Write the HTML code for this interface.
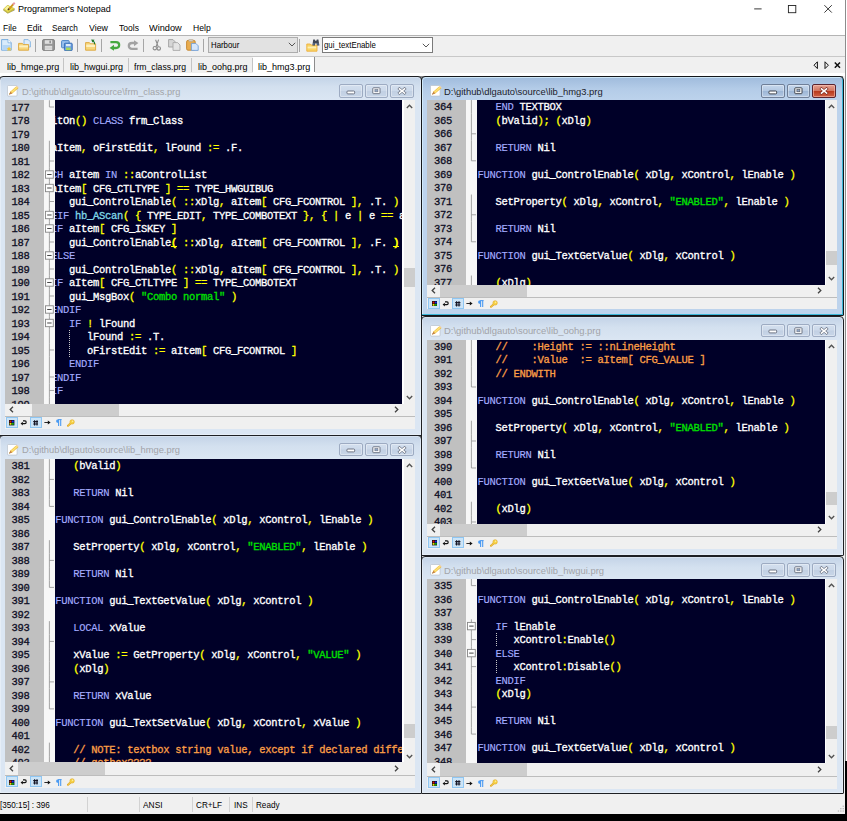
<!DOCTYPE html>
<html><head><meta charset="utf-8"><title>Programmer's Notepad</title>
<style>
html,body{margin:0;padding:0;background:#fff}
body{width:847px;height:821px;position:relative;overflow:hidden;font-family:"Liberation Sans",sans-serif;font-size:11px;color:#000}
.abs{position:absolute}
.clip{overflow:hidden}
.ui{position:absolute;white-space:nowrap;line-height:14px;height:14px}
.cw{position:absolute;box-sizing:border-box;border:1px solid #1e2024;border-radius:4px 4px 1px 1px;
 background:linear-gradient(#c3d3e7 0px,#d3e0ef 10px,#dbe6f3 24px,#dbe6f3 100%);box-shadow:inset 0 0 0 1px rgba(255,255,255,0.32)}
.cw.act{background:linear-gradient(#9fbbdc 0px,#b4cce8 12px,#bdd3ec 24px,#bdd3ec 100%);border-color:#14161a;box-shadow:inset -1px -1px 0 0 #3bb6d6,inset 1px 1px 0 0 rgba(215,240,252,0.8)}
.wt{white-space:nowrap;font-size:9.8px;line-height:14px}
.wb{position:absolute;box-sizing:border-box;border:1px solid #9dabc2;border-radius:2px;
 background:linear-gradient(#d3dfee 0%,#ccd9ea 48%,#c2d0e3 52%,#c8d6e8 100%);box-shadow:inset 0 0 0 1px rgba(255,255,255,0.35)}
.wb.ab{border-color:#6f7f98;background:linear-gradient(#c6d7ec 0%,#b3c8e2 48%,#9db6d6 52%,#b4c9e3 100%)}
.wb.red{border-color:#5a2430;background:linear-gradient(#e3a193 0%,#d27560 48%,#b9391c 52%,#cf6247 100%);box-shadow:inset 0 0 0 1px rgba(255,200,185,0.55)}
.code{background:#000028;color:#ffffff;font-family:"Liberation Mono",monospace;font-weight:normal;-webkit-text-stroke:0.32px;font-size:10.5px;letter-spacing:-0.3011px}
.cl{position:absolute;white-space:pre;line-height:13.5px;height:13.5px}
.ln{position:absolute;left:0;width:24.6px;text-align:right;white-space:pre;line-height:13.5px;height:13.5px;
 font-family:"Liberation Mono",monospace;font-weight:normal;-webkit-text-stroke:0.3px;font-size:10.5px;letter-spacing:-0.3011px;color:#0e0e24}
.k{color:#a4acff;-webkit-text-stroke:0.12px}.o{color:#ffff00}.s{color:#00e000}.c{color:#fa9e46}.f{color:#7fd6e6}
.hb{text-decoration:underline;text-decoration-thickness:1.4px;text-underline-offset:0.3px;text-decoration-skip-ink:none;-webkit-text-stroke:0.7px}
.sep{position:absolute;width:1px;background:#a6a6a6;top:38.6px;height:13px}
.tsep{position:absolute;width:1px;background:#c4c4c4;top:58px;height:13.5px}
.ssep{position:absolute;width:1px;background:#d2d2d2;top:796.5px;height:15.5px}
</style></head>
<body>
<svg class="abs" style="left:0px;top:0px" width="18" height="16" viewBox="0 0 18 16"><path d="M3.2 9.3 L7.6 5.0 L14.6 8.4 L14.5 10.4 L7.8 13.6 L3.5 10.6 Z" fill="#9a9a86"/><path d="M3.4 9.0 L7.6 5.0 L14.4 8.3 L7.9 12.6 Z" fill="#e6d944"/><path d="M4.6 8.8 L7.6 5.8 L9.4 6.8 L6.6 10.2 Z" fill="#f6f2a8"/><path d="M3.5 9.6 L7.9 12.7 L14.4 8.6 L14.4 9.8 L7.8 13.4 L3.6 10.4 Z" fill="#cfc02e"/><path d="M8.6 9.3 L13.4 4.2" stroke="#c48a14" stroke-width="1.9"/><path d="M9.2 8.4 L13.0 4.4" stroke="#e6b83a" stroke-width="0.7"/><path d="M13.0 4.6 L14.7 2.8" stroke="#e79aa4" stroke-width="2"/><path d="M8.0 9.9 L9.0 8.9" stroke="#4a3a3a" stroke-width="1.5"/></svg>
<div class="ui" id="ttl" style="left:18.3px;top:2.3px;font-size:9.6px;transform:scaleX(0.9383);transform-origin:0 0;color:#000">Programmer's Notepad</div>
<svg class="abs" style="left:752px;top:2px" width="90" height="14" viewBox="0 0 90 14"><path d="M2.2 6.9 H9.6" stroke="#222" stroke-width="0.9"/><rect x="36.4" y="3.5" width="7.4" height="7.2" fill="none" stroke="#222" stroke-width="0.9"/><path d="M72.4 3.2 L79.8 10.6 M79.8 3.2 L72.4 10.6" stroke="#222" stroke-width="0.9"/></svg>
<div class="ui mn" id="m0" style="left:2.6px;top:20.5px;font-size:9.4px;transform:scaleX(0.9007);transform-origin:0 0">File</div>
<div class="ui mn" id="m1" style="left:26.5px;top:20.5px;font-size:9.4px;transform:scaleX(0.9136);transform-origin:0 0">Edit</div>
<div class="ui mn" id="m2" style="left:52.3px;top:20.5px;font-size:9.4px;transform:scaleX(0.8721);transform-origin:0 0">Search</div>
<div class="ui mn" id="m3" style="left:88.9px;top:20.5px;font-size:9.4px;transform:scaleX(0.9403);transform-origin:0 0">View</div>
<div class="ui mn" id="m4" style="left:118.6px;top:20.5px;font-size:9.4px;transform:scaleX(0.9087);transform-origin:0 0">Tools</div>
<div class="ui mn" id="m5" style="left:149.2px;top:20.5px;font-size:9.4px;transform:scaleX(0.9820);transform-origin:0 0">Window</div>
<div class="ui mn" id="m6" style="left:192.7px;top:20.5px;font-size:9.4px;transform:scaleX(0.9171);transform-origin:0 0">Help</div>
<div class="abs" style="left:0;top:35.2px;width:845.4px;height:21.8px;background:#f0f0f0;border-top:1px solid #b4b4b4;border-bottom:1px solid #c8c8c8;box-sizing:border-box"></div>
<div class="abs" style="left:0;top:57px;width:845.4px;height:15.6px;background:#f0f0f0"></div>
<div class="abs" style="left:0;top:72.6px;width:845.4px;height:3.2px;background:#fff"></div>
<div class="abs" style="left:0;top:75.6px;width:845.4px;height:1px;background:linear-gradient(#9a9a9a,#5a5a5a)"></div>
<div class="abs" style="left:0;top:76px;width:845.4px;height:719px;background:#f0f0f0"></div>
<div class="abs" style="left:417px;top:76px;width:9px;height:4px;background:#8e8e8e"></div>
<div class="abs" style="left:840px;top:76px;width:5.4px;height:4px;background:linear-gradient(90deg,#8e8e8e 60%,#f0f0f0 61%)"></div>
<div class="sep" style="left:35.1px"></div>
<div class="sep" style="left:77.0px"></div>
<div class="sep" style="left:100.8px"></div>
<div class="sep" style="left:143.0px"></div>
<div class="sep" style="left:203.0px"></div>
<div class="sep" style="left:299.1px"></div>
<svg class="abs" style="left:1.2px;top:39.2px" width="11" height="12" viewBox="0 0 11 12"><path d="M0.6 0.6 H7 L10.2 3.8 V11.2 H0.6 Z" fill="#d9ebfb" stroke="#6ea6dc" stroke-width="0.9"/><path d="M1.4 6 H9.4 V10.6 H1.4 Z" fill="#b5d6f6"/><path d="M7 0.6 V3.8 H10.2" fill="#fff" stroke="#6ea6dc" stroke-width="0.7"/><path d="M8 7.6 L8.8 9.2 L10.6 9.4 L9.3 10.5 L9.7 12 L8 11.2 L6.4 12 L6.8 10.5 L5.5 9.4 L7.2 9.2 Z" fill="#f4c431"/></svg>
<svg class="abs" style="left:18px;top:39.2px" width="13" height="12" viewBox="0 0 13 12"><path d="M6 0.6 H10.2 L12.4 2.8 V8 H6 Z" fill="#dcebfa" stroke="#7aaee0" stroke-width="0.8"/><path d="M0.6 4.4 H4.4 L5.4 5.6 H10.6 V11.2 H0.6 Z" fill="#f7d67a" stroke="#dca53a" stroke-width="0.9"/><path d="M1.2 6.4 H10 V8.4 H1.2 Z" fill="#fdf0c0"/></svg>
<svg class="abs" style="left:41.8px;top:39.4px" width="13" height="12" viewBox="0 0 13 12"><rect x="0.6" y="0.6" width="11.8" height="10.8" rx="1.2" fill="#979797" stroke="#787878" stroke-width="0.9"/><rect x="2.8" y="1.2" width="7.4" height="3.6" fill="#dedede"/><rect x="7.4" y="1.6" width="1.5" height="2.6" fill="#8a8a8a"/><rect x="2.6" y="6.6" width="7.8" height="4.6" fill="#e4e4e4" stroke="#888" stroke-width="0.4"/><path d="M3 8.2 H10 M3 9.8 H10" stroke="#b8b8b8" stroke-width="0.5"/></svg>
<svg class="abs" style="left:60.8px;top:40.2px" width="12" height="11" viewBox="0 0 12 11"><rect x="0.6" y="0.6" width="7.6" height="7.2" rx="0.8" fill="#9cc2ee" stroke="#3f7cc4" stroke-width="0.9"/><rect x="3.4" y="3.2" width="7.8" height="7.4" rx="0.8" fill="#6fa3e2" stroke="#2f66b0" stroke-width="0.9"/><rect x="5" y="4" width="4.6" height="2.2" fill="#dce9f9"/><rect x="5" y="7.6" width="4.6" height="2.6" fill="#a8d85a"/></svg>
<svg class="abs" style="left:84.8px;top:39.4px" width="12" height="12" viewBox="0 0 12 12"><path d="M0.6 3.6 H4.4 L5.4 4.8 H10.6 V11.2 H0.6 Z" fill="#f7d67a" stroke="#dca53a" stroke-width="0.9"/><path d="M1.2 5.6 H10 V8 H1.2 Z" fill="#fdf0c0"/><path d="M9.6 5.4 C9.8 3.6 9.2 2.6 8 2" stroke="#1f7a2a" stroke-width="1.2" fill="none"/><path d="M6.2 0.4 L9.6 0.8 L7.4 3.6 Z" fill="#1f7a2a"/></svg>
<svg class="abs" style="left:108.6px;top:39.8px" width="12" height="11" viewBox="0 0 12 11"><path d="M1.4 2.2 H7 C11.2 2.2 11.2 8 7 8 H4.4" stroke="#45a83e" stroke-width="2.3" fill="none"/><path d="M5 4.8 L0.6 8 L5 10.8 Z" fill="#45a83e"/></svg>
<svg class="abs" style="left:126.6px;top:39.8px" width="12" height="11" viewBox="0 0 12 11"><path d="M7.6 3 H5 C0.8 3 0.8 8.8 5 8.8 H10.6" stroke="#a2a2a2" stroke-width="2.3" fill="none"/><path d="M7 0.2 L11.4 3 L7 6.2 Z" fill="#a2a2a2"/></svg>
<svg class="abs" style="left:151.6px;top:39.4px" width="10" height="12" viewBox="0 0 10 12"><path d="M6.6 0.6 L4 8 M3.6 0.8 L6.2 7.6" stroke="#8c8c8c" stroke-width="1.1" fill="none"/><circle cx="2.8" cy="9.2" r="1.7" fill="none" stroke="#8c8c8c" stroke-width="1.1"/><circle cx="6.8" cy="9.4" r="1.7" fill="none" stroke="#8c8c8c" stroke-width="1.1"/></svg>
<svg class="abs" style="left:168px;top:39.4px" width="13" height="12" viewBox="0 0 13 12"><path d="M0.6 0.6 H5 L7.4 3 V8 H0.6 Z" fill="#d6d6d6" stroke="#a0a0a0" stroke-width="0.9"/><path d="M5 3.6 H9.6 L12 6 V11.4 H5 Z" fill="#e4e4e4" stroke="#a8a8a8" stroke-width="0.9"/></svg>
<svg class="abs" style="left:186.2px;top:39.2px" width="13" height="12" viewBox="0 0 13 12"><rect x="0.6" y="1.4" width="8.6" height="9.8" rx="1.4" fill="#e9ac4e" stroke="#c4842c" stroke-width="0.9"/><rect x="2.8" y="0.4" width="4.2" height="2" rx="0.6" fill="#d8d0c4" stroke="#a89c88" stroke-width="0.5"/><path d="M5.4 4.4 H9.8 L12.2 6.8 V11.4 H5.4 Z" fill="#d6e6fa" stroke="#6f9fd8" stroke-width="0.9"/></svg>
<svg class="abs" style="left:305.6px;top:38.6px" width="14" height="13" viewBox="0 0 14 13"><path d="M0.8 5 H4.2 L5.2 6 H11 V12.2 H0.8 Z" fill="#f9d566" stroke="#eeb040" stroke-width="0.9"/><path d="M1.6 7.6 H10.2 V9.4 H1.6 Z" fill="#fdeeb4"/><path d="M7.2 0.6 H8.8 L9.2 1.8 H10.4 L10.8 0.6 H12.4 L13.4 6.4 H10.8 V4.6 H9 V6.4 H6.4 Z" fill="#3f4754"/><path d="M7 5 H8.6 M11.2 5 H12.8" stroke="#6c8fc4" stroke-width="0.9"/></svg>
<div class="abs" style="left:208px;top:37.2px;width:90px;height:15.4px;box-sizing:border-box;background:#e2e2e2;border:1px solid #adadad"></div>
<div class="ui" id="cb1" style="left:211.4px;top:38px;font-size:9.2px;transform:scaleX(0.8524);transform-origin:0 0">Harbour</div>
<svg class="abs" style="left:287.6px;top:42.4px" width="8" height="5" viewBox="0 0 8 5"><path d="M0.8 0.8 L4 4 L7.2 0.8" stroke="#444" stroke-width="0.9" fill="none"/></svg>
<div class="abs" style="left:322.2px;top:37.2px;width:111px;height:15.4px;box-sizing:border-box;background:#fff;border:1px solid #7a7a7a"></div>
<div class="ui" id="cb2" style="left:324.2px;top:38px;font-size:9.2px;transform:scaleX(0.8520);transform-origin:0 0">gui_textEnable</div>
<svg class="abs" style="left:422.4px;top:42.6px" width="8" height="5" viewBox="0 0 8 5"><path d="M0.8 0.8 L4 4 L7.2 0.8" stroke="#444" stroke-width="0.9" fill="none"/></svg>
<div class="abs" style="left:253px;top:57px;width:61.6px;height:17.6px;background:#fff"></div>
<div class="ui tb" id="t0" style="left:6.6px;top:59.5px;font-size:9.4px;transform:scaleX(0.9631);transform-origin:0 0">lib_hmge.prg</div>
<div class="ui tb" id="t1" style="left:69.9px;top:59.5px;font-size:9.4px;transform:scaleX(0.9601);transform-origin:0 0">lib_hwgui.prg</div>
<div class="ui tb" id="t2" style="left:134.1px;top:59.5px;font-size:9.4px;transform:scaleX(0.9236);transform-origin:0 0">frm_class.prg</div>
<div class="ui tb" id="t3" style="left:197.6px;top:59.5px;font-size:9.4px;transform:scaleX(0.9574);transform-origin:0 0">lib_oohg.prg</div>
<div class="ui tb" id="t4" style="left:258.0px;top:59.5px;font-size:9.4px;transform:scaleX(0.9631);transform-origin:0 0">lib_hmg3.prg</div>
<div class="tsep" style="left:62.8px"></div>
<div class="tsep" style="left:127.6px"></div>
<div class="tsep" style="left:191.0px"></div>
<div class="tsep" style="left:252.1px"></div>
<div class="tsep" style="left:314.1px;background:#8c8c8c;top:57.2px;height:15.2px"></div>
<svg class="abs" style="left:813px;top:61.2px" width="30" height="9" viewBox="0 0 30 9"><path d="M4.4 0.8 L1 4.2 L4.4 7.6 Z" fill="none" stroke="#111" stroke-width="1"/><path d="M12 0.8 L15.4 4.2 L12 7.6 Z" fill="none" stroke="#111" stroke-width="1"/><path d="M21.8 1.4 L27 6.8 M27 1.4 L21.8 6.8" stroke="#111" stroke-width="1.5"/></svg>
<div class="cw" style="left:-1px;top:76.4px;width:422.5px;height:359.6px"></div>
<svg class="abs" style="left:7.2px;top:85.4px" width="12" height="12" viewBox="0 0 12 12"><rect x="0.5" y="0.5" width="9.6" height="10.6" rx="1" fill="#fff" stroke="#b9c1cc" stroke-width="0.7"/><path d="M2.2 9.6 L3.4 6.6 L9.4 1.2 L11.3 3.2 L5.3 8.6 Z" fill="#f2c244"/><path d="M3.9 6.9 L9.7 1.8 L10.6 2.8 L4.9 8 Z" fill="#fde27a"/><path d="M2.2 9.6 L3.4 6.6 L5.3 8.6 Z" fill="#c98548"/><path d="M2.2 9.6 L2.7 8.4 L3.4 9.1 Z" fill="#5a4030"/><path d="M9.4 1.2 L10.1 0.7 L11.8 2.5 L11.3 3.2 Z" fill="#f3d2b0"/></svg>
<div class="abs wt" id="wt_w1" style="left:21.9px;top:84.8px;color:#a2a3a8;transform:scaleX(0.9439);transform-origin:0 0">D:\github\dlgauto\source\frm_class.prg</div>
<div class="wb" style="left:339.2px;top:84.3px;width:23.4px;height:13.6px"></div>
<svg class="abs" style="left:345.9px;top:89.6px" width="10" height="6" viewBox="0 0 10 6"><rect x="0.9" y="1" width="7.8" height="2.9" rx="1" fill="#fff" stroke="#6c7484" stroke-width="1"/></svg>
<div class="wb" style="left:364.7px;top:84.3px;width:23.4px;height:13.6px"></div>
<svg class="abs" style="left:371.9px;top:87.3px" width="9" height="8" viewBox="0 0 9 8"><rect x="0.8" y="0.8" width="7.2" height="5.9" rx="0.7" fill="#fff" stroke="#6c7484" stroke-width="1"/><rect x="2.9" y="2.6" width="3" height="2.2" fill="#8fa6c8" stroke="#6c7484" stroke-width="0.6"/></svg>
<div class="wb" style="left:390.2px;top:84.3px;width:23.4px;height:13.6px"></div>
<svg class="abs" style="left:396.9px;top:87.2px" width="10" height="8" viewBox="0 0 10 8"><path d="M2.5 1.9 L7.5 6.0 M7.5 1.9 L2.5 6.0" stroke="#6c7484" stroke-width="2.9" stroke-linecap="square"/><path d="M2.5 1.9 L7.5 6.0 M7.5 1.9 L2.5 6.0" stroke="#fff" stroke-width="1.6" stroke-linecap="square"/></svg>
<div class="abs" style="left:5.0px;top:100.2px;width:410.0px;height:328.6px;background:#f0f0f0"></div>
<div class="abs clip" style="left:5.0px;top:100.2px;width:38.6px;height:303.7px;background:#c0c0c0">
<div class="ln" style="top:1.45px">177</div>
<div class="ln" style="top:14.95px">178</div>
<div class="ln" style="top:28.45px">179</div>
<div class="ln" style="top:41.95px">180</div>
<div class="ln" style="top:55.45px">181</div>
<div class="ln" style="top:68.95px">182</div>
<div class="ln" style="top:82.45px">183</div>
<div class="ln" style="top:95.95px">184</div>
<div class="ln" style="top:109.45px">185</div>
<div class="ln" style="top:122.95px">186</div>
<div class="ln" style="top:136.45px">187</div>
<div class="ln" style="top:149.95px">188</div>
<div class="ln" style="top:163.45px">189</div>
<div class="ln" style="top:176.95px">190</div>
<div class="ln" style="top:190.45px">191</div>
<div class="ln" style="top:203.95px">192</div>
<div class="ln" style="top:217.45px">193</div>
<div class="ln" style="top:230.95px">194</div>
<div class="ln" style="top:244.45px">195</div>
<div class="ln" style="top:257.95px">196</div>
<div class="ln" style="top:271.45px">197</div>
<div class="ln" style="top:284.95px">198</div>
<div class="ln" style="top:298.45px">199</div>
</div>
<div class="abs" style="left:43.6px;top:100.2px;width:11.0px;height:303.7px;background:#f7f7f7"></div>
<svg class="abs" style="left:5.0px;top:100.2px" width="50.1" height="303.7" viewBox="0 0 50.1 303.7"><path d="M44.40 0.25V7.00H49.00" stroke="#9a9a9a" stroke-width="0.9" fill="none"/><path d="M44.40 40.75V54.25" stroke="#9a9a9a" stroke-width="0.9" fill="none"/><path d="M44.40 54.25V67.75M44.40 61.00H49.00" stroke="#9a9a9a" stroke-width="0.9" fill="none"/><path d="M44.40 67.75V71.00" stroke="#9a9a9a" stroke-width="0.9" fill="none"/><path d="M44.40 78.00V81.25" stroke="#9a9a9a" stroke-width="0.9" fill="none"/><rect x="40.50" y="70.80" width="7.8" height="7.4" fill="#fdfdfd" stroke="#868686" stroke-width="0.9"/><path d="M42.20 74.50H46.60" stroke="#444" stroke-width="1"/><path d="M44.40 81.25V84.50" stroke="#9a9a9a" stroke-width="0.9" fill="none"/><path d="M44.40 91.50V94.75" stroke="#9a9a9a" stroke-width="0.9" fill="none"/><rect x="40.50" y="84.30" width="7.8" height="7.4" fill="#fdfdfd" stroke="#868686" stroke-width="0.9"/><path d="M42.20 88.00H46.60" stroke="#444" stroke-width="1"/><path d="M44.40 94.75V108.25M44.40 101.50H49.00" stroke="#9a9a9a" stroke-width="0.9" fill="none"/><path d="M44.40 108.25V111.50" stroke="#9a9a9a" stroke-width="0.9" fill="none"/><path d="M44.40 118.50V121.75" stroke="#9a9a9a" stroke-width="0.9" fill="none"/><rect x="40.50" y="111.30" width="7.8" height="7.4" fill="#fdfdfd" stroke="#868686" stroke-width="0.9"/><path d="M42.20 115.00H46.60" stroke="#444" stroke-width="1"/><path d="M44.40 121.75V125.00" stroke="#9a9a9a" stroke-width="0.9" fill="none"/><path d="M44.40 132.00V135.25" stroke="#9a9a9a" stroke-width="0.9" fill="none"/><rect x="40.50" y="124.80" width="7.8" height="7.4" fill="#fdfdfd" stroke="#868686" stroke-width="0.9"/><path d="M42.20 128.50H46.60" stroke="#444" stroke-width="1"/><path d="M44.40 135.25V148.75M44.40 142.00H49.00" stroke="#9a9a9a" stroke-width="0.9" fill="none"/><path d="M44.40 148.75V152.00" stroke="#9a9a9a" stroke-width="0.9" fill="none"/><path d="M44.40 159.00V162.25" stroke="#9a9a9a" stroke-width="0.9" fill="none"/><rect x="40.50" y="151.80" width="7.8" height="7.4" fill="#fdfdfd" stroke="#868686" stroke-width="0.9"/><path d="M42.20 155.50H46.60" stroke="#444" stroke-width="1"/><path d="M44.40 162.25V175.75M44.40 169.00H49.00" stroke="#9a9a9a" stroke-width="0.9" fill="none"/><path d="M44.40 175.75V179.00" stroke="#9a9a9a" stroke-width="0.9" fill="none"/><path d="M44.40 186.00V189.25" stroke="#9a9a9a" stroke-width="0.9" fill="none"/><rect x="40.50" y="178.80" width="7.8" height="7.4" fill="#fdfdfd" stroke="#868686" stroke-width="0.9"/><path d="M42.20 182.50H46.60" stroke="#444" stroke-width="1"/><path d="M44.40 189.25V202.75M44.40 196.00H49.00" stroke="#9a9a9a" stroke-width="0.9" fill="none"/><path d="M44.40 202.75V206.00" stroke="#9a9a9a" stroke-width="0.9" fill="none"/><path d="M44.40 213.00V216.25" stroke="#9a9a9a" stroke-width="0.9" fill="none"/><rect x="40.50" y="205.80" width="7.8" height="7.4" fill="#fdfdfd" stroke="#868686" stroke-width="0.9"/><path d="M42.20 209.50H46.60" stroke="#444" stroke-width="1"/><path d="M44.40 216.25V219.50" stroke="#9a9a9a" stroke-width="0.9" fill="none"/><path d="M44.40 226.50V229.75" stroke="#9a9a9a" stroke-width="0.9" fill="none"/><rect x="40.50" y="219.30" width="7.8" height="7.4" fill="#fdfdfd" stroke="#868686" stroke-width="0.9"/><path d="M42.20 223.00H46.60" stroke="#444" stroke-width="1"/><path d="M44.40 229.75V243.25" stroke="#9a9a9a" stroke-width="0.9" fill="none"/><path d="M44.40 243.25V256.75M44.40 250.00H49.00" stroke="#9a9a9a" stroke-width="0.9" fill="none"/><path d="M44.40 256.75V270.25" stroke="#9a9a9a" stroke-width="0.9" fill="none"/><path d="M44.40 270.25V283.75M44.40 277.00H49.00" stroke="#9a9a9a" stroke-width="0.9" fill="none"/><path d="M44.40 283.75V297.25M44.40 290.50H49.00" stroke="#9a9a9a" stroke-width="0.9" fill="none"/><path d="M44.40 297.25V310.75" stroke="#9a9a9a" stroke-width="0.9" fill="none"/></svg>
<div class="abs clip code" style="left:54.6px;top:100.2px;width:347.8px;height:303.7px">
<div class="cl" style="left:-3.60px;top:14.95px">itOn<span class="o">(</span><span class="o">)</span> <span class="k">CLASS</span> frm_Class</div>
<div class="cl" style="left:-3.60px;top:41.95px">aItem<span class="o">,</span> oFirstEdit<span class="o">,</span> lFound <span class="o">:</span><span class="o">=</span> .F.</div>
<div class="cl" style="left:-3.60px;top:68.95px"><span class="k">CH</span> aItem <span class="k">IN</span> <span class="o">:</span><span class="o">:</span>aControlList</div>
<div class="cl" style="left:-3.60px;top:82.45px">aItem<span class="o">[</span> CFG_CTLTYPE <span class="o">]</span> <span class="o">=</span><span class="o">=</span> TYPE_HWGUIBUG</div>
<div class="cl" style="left:-3.60px;top:95.95px">   gui_ControlEnable<span class="o">(</span> <span class="o">:</span><span class="o">:</span>xDlg<span class="o">,</span> aItem<span class="o">[</span> CFG_FCONTROL <span class="o">]</span><span class="o">,</span> .T. <span class="o">)</span></div>
<div class="cl" style="left:-3.60px;top:109.45px"><span class="k">EIF</span> <span class="f">hb_AScan</span><span class="o">(</span> <span class="o">{</span> TYPE_EDIT<span class="o">,</span> TYPE_COMBOTEXT <span class="o">}</span><span class="o">,</span> <span class="o">{</span> <span class="o">|</span> e <span class="o">|</span> e <span class="o">=</span><span class="o">=</span> aItem<span class="o">[</span> CFG_CTLTYPE <span class="o">]</span> <span class="o">}</span> <span class="o">)</span> <span class="o">!</span><span class="o">=</span> <span class="o">0</span></div>
<div class="cl" style="left:-3.60px;top:122.95px"><span class="k">IF</span> aItem<span class="o">[</span> CFG_ISKEY <span class="o">]</span></div>
<div class="cl" style="left:-3.60px;top:136.45px">   gui_ControlEnable<span class="o hb">(</span> <span class="o">:</span><span class="o">:</span>xDlg<span class="o">,</span> aItem<span class="o">[</span> CFG_FCONTROL <span class="o">]</span><span class="o">,</span> .F. <span class="o hb">)</span></div>
<div class="cl" style="left:-3.60px;top:149.95px"><span class="k">ELSE</span></div>
<div class="cl" style="left:-3.60px;top:163.45px">   gui_ControlEnable<span class="o">(</span> <span class="o">:</span><span class="o">:</span>xDlg<span class="o">,</span> aItem<span class="o">[</span> CFG_FCONTROL <span class="o">]</span><span class="o">,</span> .T. <span class="o">)</span></div>
<div class="cl" style="left:-3.60px;top:176.95px"><span class="k">IF</span> aItem<span class="o">[</span> CFG_CTLTYPE <span class="o">]</span> <span class="o">=</span><span class="o">=</span> TYPE_COMBOTEXT</div>
<div class="cl" style="left:-3.60px;top:190.45px">   gui_MsgBox<span class="o">(</span> <span class="s">&quot;Combo normal&quot;</span> <span class="o">)</span></div>
<div class="cl" style="left:-3.60px;top:203.95px"><span class="k">ENDIF</span></div>
<div class="cl" style="left:-3.60px;top:217.45px">   <span class="k">IF</span> <span class="o">!</span> lFound</div>
<div class="cl" style="left:-3.60px;top:230.95px">      lFound <span class="o">:</span><span class="o">=</span> .T.</div>
<div class="cl" style="left:-3.60px;top:244.45px">      oFirstEdit <span class="o">:</span><span class="o">=</span> aItem<span class="o">[</span> CFG_FCONTROL <span class="o">]</span></div>
<div class="cl" style="left:-3.60px;top:257.95px">   <span class="k">ENDIF</span></div>
<div class="cl" style="left:-3.60px;top:271.45px"><span class="k">ENDIF</span></div>
<div class="cl" style="left:-3.60px;top:284.95px"><span class="k">IF</span></div>
<div class="abs" style="left:14.70px;top:229.75px;width:0;height:27.00px;border-left:1px dotted #c8c8c8"></div>
</div>
<div class="abs" style="left:402.4px;top:100.2px;width:1.5px;height:303.7px;background:#fff"></div>
<div class="abs" style="left:403.9px;top:267.7px;width:10.9px;height:19.3px;background:#cdcdcd"></div>
<svg class="abs" style="left:405.8px;top:104.4px" width="7" height="5" viewBox="0 0 7 5"><path d="M0.8 4 L3.5 1.2 L6.2 4" stroke="#505050" stroke-width="1.3" fill="none"/></svg>
<svg class="abs" style="left:405.8px;top:395.3px" width="7" height="5" viewBox="0 0 7 5"><path d="M0.8 1 L3.5 3.8 L6.2 1" stroke="#505050" stroke-width="1.3" fill="none"/></svg>
<div class="abs" style="left:32.0px;top:403.9px;width:86.5px;height:11.8px;background:#cdcdcd"></div>
<svg class="abs" style="left:8.6px;top:406.3px" width="5" height="7" viewBox="0 0 5 7"><path d="M4 0.8 L1.2 3.5 L4 6.2" stroke="#404040" stroke-width="1.3" fill="none"/></svg>
<svg class="abs" style="left:394.3px;top:406.3px" width="5" height="7" viewBox="0 0 5 7"><path d="M1 0.8 L3.8 3.5 L1 6.2" stroke="#404040" stroke-width="1.3" fill="none"/></svg>
<div class="abs" style="left:5.0px;top:415.7px;width:410.0px;height:13.1px;background:#f0f0f0;border-top:1px solid #bdbdbd;box-sizing:border-box"></div>
<div class="abs" style="left:5.5px;top:417.1px;width:12.2px;height:10.7px;background:#cce4f7;border:0.8px solid #8fc6f2;box-sizing:border-box"></div>
<div class="abs" style="left:29.6px;top:417.1px;width:12.2px;height:10.7px;background:#cce4f7;border:0.8px solid #8fc6f2;box-sizing:border-box"></div>
<svg class="abs" style="left:9.2px;top:420.2px" width="5.4" height="5.4" viewBox="0 0 6 6"><rect width="6" height="6" fill="#101010"/><rect x="0.7" y="0.7" width="2" height="2" fill="#e81010"/><rect x="3.3" y="0.7" width="2" height="2" fill="#1030f0"/><rect x="0.7" y="3.3" width="2" height="2" fill="#f0e800"/><rect x="3.3" y="3.3" width="2" height="2" fill="#10b010"/></svg>
<svg class="abs" style="left:20.1px;top:419.7px" width="7" height="6" viewBox="0 0 7 6"><path d="M3 0.9 H5 C6.6 0.9 6.6 3.6 5 3.6 H2.2" stroke="#111" stroke-width="1.1" fill="none"/><path d="M2.8 1.7 L0.6 3.6 L2.8 5.5 Z" fill="#111"/></svg>
<svg class="abs" style="left:32.9px;top:420.1px" width="5.6" height="5.6" viewBox="0 0 5.6 5.6"><path d="M1.6 0.2 V5.4 M4 0.2 V5.4 M0.2 1.6 H5.4 M0.2 4 H5.4" stroke="#151525" stroke-width="1.15" fill="none"/></svg>
<svg class="abs" style="left:44.1px;top:420.4px" width="7" height="5" viewBox="0 0 7 5"><path d="M0.4 2.5 H4.6" stroke="#111" stroke-width="0.9"/><path d="M3.8 0.6 L6.6 2.5 L3.8 4.4 Z" fill="#111"/></svg>
<svg class="abs" style="left:54.9px;top:419.3px" width="7" height="8" viewBox="0 0 7 8"><path d="M3.6 0.6 V7 M5.7 0.6 V7" stroke="#4a9af2" stroke-width="1.1"/><path d="M3.4 0.6 H6.6" stroke="#4a9af2" stroke-width="1"/><path d="M3.8 0.3 C0.2 0.1 0.2 4.2 3.8 4 Z" fill="#4a9af2"/></svg>
<svg class="abs" style="left:67.2px;top:418.9px" width="8" height="8" viewBox="0 0 8 8"><path d="M1 6.8 L4 4" stroke="#e2a820" stroke-width="2" stroke-linecap="round"/><circle cx="5.1" cy="2.9" r="2.2" fill="#f7d44a" stroke="#e0a81c" stroke-width="0.6"/><path d="M1.2 6.4 L3.6 4.2" stroke="#f7dc6a" stroke-width="0.8" stroke-linecap="round"/><circle cx="5.7" cy="2.2" r="0.6" fill="#fff7c8"/></svg>
<div class="cw" style="left:-1px;top:435.3px;width:422.5px;height:358.90000000000003px"></div>
<svg class="abs" style="left:7.2px;top:444.0px" width="12" height="12" viewBox="0 0 12 12"><rect x="0.5" y="0.5" width="9.6" height="10.6" rx="1" fill="#fff" stroke="#b9c1cc" stroke-width="0.7"/><path d="M2.2 9.6 L3.4 6.6 L9.4 1.2 L11.3 3.2 L5.3 8.6 Z" fill="#f2c244"/><path d="M3.9 6.9 L9.7 1.8 L10.6 2.8 L4.9 8 Z" fill="#fde27a"/><path d="M2.2 9.6 L3.4 6.6 L5.3 8.6 Z" fill="#c98548"/><path d="M2.2 9.6 L2.7 8.4 L3.4 9.1 Z" fill="#5a4030"/><path d="M9.4 1.2 L10.1 0.7 L11.8 2.5 L11.3 3.2 Z" fill="#f3d2b0"/></svg>
<div class="abs wt" id="wt_w2" style="left:21.9px;top:443.4px;color:#a2a3a8;transform:scaleX(0.9541);transform-origin:0 0">D:\github\dlgauto\source\lib_hmge.prg</div>
<div class="wb" style="left:339.2px;top:442.9px;width:23.4px;height:13.6px"></div>
<svg class="abs" style="left:345.9px;top:448.2px" width="10" height="6" viewBox="0 0 10 6"><rect x="0.9" y="1" width="7.8" height="2.9" rx="1" fill="#fff" stroke="#6c7484" stroke-width="1"/></svg>
<div class="wb" style="left:364.7px;top:442.9px;width:23.4px;height:13.6px"></div>
<svg class="abs" style="left:371.9px;top:445.9px" width="9" height="8" viewBox="0 0 9 8"><rect x="0.8" y="0.8" width="7.2" height="5.9" rx="0.7" fill="#fff" stroke="#6c7484" stroke-width="1"/><rect x="2.9" y="2.6" width="3" height="2.2" fill="#8fa6c8" stroke="#6c7484" stroke-width="0.6"/></svg>
<div class="wb" style="left:390.2px;top:442.9px;width:23.4px;height:13.6px"></div>
<svg class="abs" style="left:396.9px;top:445.8px" width="10" height="8" viewBox="0 0 10 8"><path d="M2.5 1.9 L7.5 6.0 M7.5 1.9 L2.5 6.0" stroke="#6c7484" stroke-width="2.9" stroke-linecap="square"/><path d="M2.5 1.9 L7.5 6.0 M7.5 1.9 L2.5 6.0" stroke="#fff" stroke-width="1.6" stroke-linecap="square"/></svg>
<div class="abs" style="left:5.0px;top:458.8px;width:410.0px;height:328.8px;background:#f0f0f0"></div>
<div class="abs clip" style="left:5.0px;top:458.8px;width:38.6px;height:303.5px;background:#c0c0c0">
<div class="ln" style="top:1.35px">381</div>
<div class="ln" style="top:14.85px">382</div>
<div class="ln" style="top:28.35px">383</div>
<div class="ln" style="top:41.85px">384</div>
<div class="ln" style="top:55.35px">385</div>
<div class="ln" style="top:68.85px">386</div>
<div class="ln" style="top:82.35px">387</div>
<div class="ln" style="top:95.85px">388</div>
<div class="ln" style="top:109.35px">389</div>
<div class="ln" style="top:122.85px">390</div>
<div class="ln" style="top:136.35px">391</div>
<div class="ln" style="top:149.85px">392</div>
<div class="ln" style="top:163.35px">393</div>
<div class="ln" style="top:176.85px">394</div>
<div class="ln" style="top:190.35px">395</div>
<div class="ln" style="top:203.85px">396</div>
<div class="ln" style="top:217.35px">397</div>
<div class="ln" style="top:230.85px">398</div>
<div class="ln" style="top:244.35px">399</div>
<div class="ln" style="top:257.85px">400</div>
<div class="ln" style="top:271.35px">401</div>
<div class="ln" style="top:284.85px">402</div>
<div class="ln" style="top:298.35px">403</div>
</div>
<div class="abs" style="left:43.6px;top:458.8px;width:11.0px;height:303.5px;background:#f7f7f7"></div>
<svg class="abs" style="left:5.0px;top:458.8px" width="50.1" height="303.5" viewBox="0 0 50.1 303.5"><path d="M44.40 0.15V13.65" stroke="#9a9a9a" stroke-width="0.9" fill="none"/><path d="M44.40 13.65V27.15M44.40 20.40H49.00" stroke="#9a9a9a" stroke-width="0.9" fill="none"/><path d="M44.40 27.15V40.65" stroke="#9a9a9a" stroke-width="0.9" fill="none"/><path d="M44.40 40.65V47.40H49.00" stroke="#9a9a9a" stroke-width="0.9" fill="none"/><path d="M44.40 81.15V94.65" stroke="#9a9a9a" stroke-width="0.9" fill="none"/><path d="M44.40 94.65V108.15M44.40 101.40H49.00" stroke="#9a9a9a" stroke-width="0.9" fill="none"/><path d="M44.40 108.15V121.65" stroke="#9a9a9a" stroke-width="0.9" fill="none"/><path d="M44.40 121.65V128.40H49.00" stroke="#9a9a9a" stroke-width="0.9" fill="none"/><path d="M44.40 162.15V175.65" stroke="#9a9a9a" stroke-width="0.9" fill="none"/><path d="M44.40 175.65V189.15M44.40 182.40H49.00" stroke="#9a9a9a" stroke-width="0.9" fill="none"/><path d="M44.40 189.15V202.65" stroke="#9a9a9a" stroke-width="0.9" fill="none"/><path d="M44.40 202.65V216.15" stroke="#9a9a9a" stroke-width="0.9" fill="none"/><path d="M44.40 216.15V229.65M44.40 222.90H49.00" stroke="#9a9a9a" stroke-width="0.9" fill="none"/><path d="M44.40 229.65V243.15" stroke="#9a9a9a" stroke-width="0.9" fill="none"/><path d="M44.40 243.15V249.90H49.00" stroke="#9a9a9a" stroke-width="0.9" fill="none"/><path d="M44.40 283.65V297.15" stroke="#9a9a9a" stroke-width="0.9" fill="none"/><path d="M44.40 297.15V310.65" stroke="#9a9a9a" stroke-width="0.9" fill="none"/></svg>
<div class="abs clip code" style="left:54.6px;top:458.8px;width:347.8px;height:303.5px">
<div class="cl" style="left:0.70px;top:1.35px">   <span class="o">(</span>bValid<span class="o">)</span></div>
<div class="cl" style="left:0.70px;top:28.35px">   <span class="k">RETURN</span> Nil</div>
<div class="cl" style="left:0.70px;top:55.35px"><span class="k">FUNCTION</span> gui_ControlEnable<span class="o">(</span> xDlg<span class="o">,</span> xControl<span class="o">,</span> lEnable <span class="o">)</span></div>
<div class="cl" style="left:0.70px;top:82.35px">   SetProperty<span class="o">(</span> xDlg<span class="o">,</span> xControl<span class="o">,</span> <span class="s">&quot;ENABLED&quot;</span><span class="o">,</span> lEnable <span class="o">)</span></div>
<div class="cl" style="left:0.70px;top:109.35px">   <span class="k">RETURN</span> Nil</div>
<div class="cl" style="left:0.70px;top:136.35px"><span class="k">FUNCTION</span> gui_TextGetValue<span class="o">(</span> xDlg<span class="o">,</span> xControl <span class="o">)</span></div>
<div class="cl" style="left:0.70px;top:163.35px">   <span class="k">LOCAL</span> xValue</div>
<div class="cl" style="left:0.70px;top:190.35px">   xValue <span class="o">:</span><span class="o">=</span> GetProperty<span class="o">(</span> xDlg<span class="o">,</span> xControl<span class="o">,</span> <span class="s">&quot;VALUE&quot;</span> <span class="o">)</span></div>
<div class="cl" style="left:0.70px;top:203.85px">   <span class="o">(</span>xDlg<span class="o">)</span></div>
<div class="cl" style="left:0.70px;top:230.85px">   <span class="k">RETURN</span> xValue</div>
<div class="cl" style="left:0.70px;top:257.85px"><span class="k">FUNCTION</span> gui_TextSetValue<span class="o">(</span> xDlg<span class="o">,</span> xControl<span class="o">,</span> xValue <span class="o">)</span></div>
<div class="cl" style="left:0.70px;top:284.85px">   <span class="c">// NOTE: textbox string value, except if declared different</span></div>
<div class="cl" style="left:0.70px;top:298.35px">   <span class="c">// getbox????</span></div>
</div>
<div class="abs" style="left:402.4px;top:458.8px;width:1.5px;height:303.5px;background:#fff"></div>
<div class="abs" style="left:403.9px;top:724.0px;width:10.9px;height:13.5px;background:#cdcdcd"></div>
<svg class="abs" style="left:405.8px;top:463.0px" width="7" height="5" viewBox="0 0 7 5"><path d="M0.8 4 L3.5 1.2 L6.2 4" stroke="#505050" stroke-width="1.3" fill="none"/></svg>
<svg class="abs" style="left:405.8px;top:753.7px" width="7" height="5" viewBox="0 0 7 5"><path d="M0.8 1 L3.5 3.8 L6.2 1" stroke="#505050" stroke-width="1.3" fill="none"/></svg>
<div class="abs" style="left:17.5px;top:762.3px;width:87.0px;height:12.7px;background:#cdcdcd"></div>
<svg class="abs" style="left:8.6px;top:765.1px" width="5" height="7" viewBox="0 0 5 7"><path d="M4 0.8 L1.2 3.5 L4 6.2" stroke="#404040" stroke-width="1.3" fill="none"/></svg>
<svg class="abs" style="left:394.3px;top:765.1px" width="5" height="7" viewBox="0 0 5 7"><path d="M1 0.8 L3.8 3.5 L1 6.2" stroke="#404040" stroke-width="1.3" fill="none"/></svg>
<div class="abs" style="left:5.0px;top:775.0px;width:410.0px;height:12.6px;background:#f0f0f0;border-top:1px solid #bdbdbd;box-sizing:border-box"></div>
<div class="abs" style="left:5.5px;top:776.4px;width:12.2px;height:10.7px;background:#cce4f7;border:0.8px solid #8fc6f2;box-sizing:border-box"></div>
<div class="abs" style="left:29.6px;top:776.4px;width:12.2px;height:10.7px;background:#cce4f7;border:0.8px solid #8fc6f2;box-sizing:border-box"></div>
<svg class="abs" style="left:9.2px;top:779.5px" width="5.4" height="5.4" viewBox="0 0 6 6"><rect width="6" height="6" fill="#101010"/><rect x="0.7" y="0.7" width="2" height="2" fill="#e81010"/><rect x="3.3" y="0.7" width="2" height="2" fill="#1030f0"/><rect x="0.7" y="3.3" width="2" height="2" fill="#f0e800"/><rect x="3.3" y="3.3" width="2" height="2" fill="#10b010"/></svg>
<svg class="abs" style="left:20.1px;top:779.0px" width="7" height="6" viewBox="0 0 7 6"><path d="M3 0.9 H5 C6.6 0.9 6.6 3.6 5 3.6 H2.2" stroke="#111" stroke-width="1.1" fill="none"/><path d="M2.8 1.7 L0.6 3.6 L2.8 5.5 Z" fill="#111"/></svg>
<svg class="abs" style="left:32.9px;top:779.4px" width="5.6" height="5.6" viewBox="0 0 5.6 5.6"><path d="M1.6 0.2 V5.4 M4 0.2 V5.4 M0.2 1.6 H5.4 M0.2 4 H5.4" stroke="#151525" stroke-width="1.15" fill="none"/></svg>
<svg class="abs" style="left:44.1px;top:779.7px" width="7" height="5" viewBox="0 0 7 5"><path d="M0.4 2.5 H4.6" stroke="#111" stroke-width="0.9"/><path d="M3.8 0.6 L6.6 2.5 L3.8 4.4 Z" fill="#111"/></svg>
<svg class="abs" style="left:54.9px;top:778.6px" width="7" height="8" viewBox="0 0 7 8"><path d="M3.6 0.6 V7 M5.7 0.6 V7" stroke="#4a9af2" stroke-width="1.1"/><path d="M3.4 0.6 H6.6" stroke="#4a9af2" stroke-width="1"/><path d="M3.8 0.3 C0.2 0.1 0.2 4.2 3.8 4 Z" fill="#4a9af2"/></svg>
<svg class="abs" style="left:67.2px;top:778.2px" width="8" height="8" viewBox="0 0 8 8"><path d="M1 6.8 L4 4" stroke="#e2a820" stroke-width="2" stroke-linecap="round"/><circle cx="5.1" cy="2.9" r="2.2" fill="#f7d44a" stroke="#e0a81c" stroke-width="0.6"/><path d="M1.2 6.4 L3.6 4.2" stroke="#f7dc6a" stroke-width="0.8" stroke-linecap="round"/><circle cx="5.7" cy="2.2" r="0.6" fill="#fff7c8"/></svg>
<div class="cw act" style="left:421.2px;top:76.4px;width:422.59999999999997px;height:239.79999999999998px"></div>
<svg class="abs" style="left:429.6px;top:85.3px" width="12" height="12" viewBox="0 0 12 12"><rect x="0.5" y="0.5" width="9.6" height="10.6" rx="1" fill="#fff" stroke="#b9c1cc" stroke-width="0.7"/><path d="M2.2 9.6 L3.4 6.6 L9.4 1.2 L11.3 3.2 L5.3 8.6 Z" fill="#f2c244"/><path d="M3.9 6.9 L9.7 1.8 L10.6 2.8 L4.9 8 Z" fill="#fde27a"/><path d="M2.2 9.6 L3.4 6.6 L5.3 8.6 Z" fill="#c98548"/><path d="M2.2 9.6 L2.7 8.4 L3.4 9.1 Z" fill="#5a4030"/><path d="M9.4 1.2 L10.1 0.7 L11.8 2.5 L11.3 3.2 Z" fill="#f3d2b0"/></svg>
<div class="abs wt" id="wt_w3" style="left:443.7px;top:84.7px;color:#1c1c2a;transform:scaleX(0.9583);transform-origin:0 0">D:\github\dlgauto\source\lib_hmg3.prg</div>
<div class="wb ab" style="left:761.2px;top:84.2px;width:23.4px;height:13.6px"></div>
<svg class="abs" style="left:767.9px;top:89.5px" width="10" height="6" viewBox="0 0 10 6"><rect x="0.9" y="1" width="7.8" height="2.9" rx="1" fill="#fff" stroke="#3e434c" stroke-width="1"/></svg>
<div class="wb ab" style="left:786.7px;top:84.2px;width:23.4px;height:13.6px"></div>
<svg class="abs" style="left:793.9px;top:87.2px" width="9" height="8" viewBox="0 0 9 8"><rect x="0.8" y="0.8" width="7.2" height="5.9" rx="0.7" fill="#fff" stroke="#3e434c" stroke-width="1"/><rect x="2.9" y="2.6" width="3" height="2.2" fill="#8fa6c8" stroke="#3e434c" stroke-width="0.6"/></svg>
<div class="wb red" style="left:812.2px;top:84.2px;width:23.4px;height:13.6px"></div>
<svg class="abs" style="left:818.9px;top:87.1px" width="10" height="8" viewBox="0 0 10 8"><path d="M2.5 1.9 L7.5 6.0 M7.5 1.9 L2.5 6.0" stroke="#7a2a20" stroke-width="2.9" stroke-linecap="square"/><path d="M2.5 1.9 L7.5 6.0 M7.5 1.9 L2.5 6.0" stroke="#fff" stroke-width="1.6" stroke-linecap="square"/></svg>
<div class="abs" style="left:427.3px;top:100.1px;width:409.9px;height:209.4px;background:#f0f0f0"></div>
<div class="abs clip" style="left:427.3px;top:100.1px;width:38.6px;height:184.7px;background:#c0c0c0">
<div class="ln" style="top:1.25px">364</div>
<div class="ln" style="top:14.75px">365</div>
<div class="ln" style="top:28.25px">366</div>
<div class="ln" style="top:41.75px">367</div>
<div class="ln" style="top:55.25px">368</div>
<div class="ln" style="top:68.75px">369</div>
<div class="ln" style="top:82.25px">370</div>
<div class="ln" style="top:95.75px">371</div>
<div class="ln" style="top:109.25px">372</div>
<div class="ln" style="top:122.75px">373</div>
<div class="ln" style="top:136.25px">374</div>
<div class="ln" style="top:149.75px">375</div>
<div class="ln" style="top:163.25px">376</div>
<div class="ln" style="top:176.75px">377</div>
<div class="ln" style="top:190.25px">378</div>
</div>
<div class="abs" style="left:465.9px;top:100.1px;width:11.0px;height:184.7px;background:#f7f7f7"></div>
<svg class="abs" style="left:427.3px;top:100.1px" width="50.1" height="184.7" viewBox="0 0 50.1 184.7"><path d="M44.40 0.05V13.55" stroke="#9a9a9a" stroke-width="0.9" fill="none"/><path d="M44.40 13.55V27.05" stroke="#9a9a9a" stroke-width="0.9" fill="none"/><path d="M44.40 27.05V40.55M44.40 33.80H49.00" stroke="#9a9a9a" stroke-width="0.9" fill="none"/><path d="M44.40 40.55V54.05" stroke="#9a9a9a" stroke-width="0.9" fill="none"/><path d="M44.40 54.05V60.80H49.00" stroke="#9a9a9a" stroke-width="0.9" fill="none"/><path d="M44.40 94.55V108.05" stroke="#9a9a9a" stroke-width="0.9" fill="none"/><path d="M44.40 108.05V121.55M44.40 114.80H49.00" stroke="#9a9a9a" stroke-width="0.9" fill="none"/><path d="M44.40 121.55V135.05" stroke="#9a9a9a" stroke-width="0.9" fill="none"/><path d="M44.40 135.05V141.80H49.00" stroke="#9a9a9a" stroke-width="0.9" fill="none"/><path d="M44.40 175.55V189.05" stroke="#9a9a9a" stroke-width="0.9" fill="none"/><path d="M44.40 189.05V202.55M44.40 195.80H49.00" stroke="#9a9a9a" stroke-width="0.9" fill="none"/></svg>
<div class="abs clip code" style="left:476.9px;top:100.1px;width:347.7px;height:184.7px">
<div class="cl" style="left:0.70px;top:1.25px">   <span class="k">END</span> TEXTBOX</div>
<div class="cl" style="left:0.70px;top:14.75px">   <span class="o">(</span>bValid<span class="o">)</span><span class="o">;</span> <span class="o">(</span>xDlg<span class="o">)</span></div>
<div class="cl" style="left:0.70px;top:41.75px">   <span class="k">RETURN</span> Nil</div>
<div class="cl" style="left:0.70px;top:68.75px"><span class="k">FUNCTION</span> gui_ControlEnable<span class="o">(</span> xDlg<span class="o">,</span> xControl<span class="o">,</span> lEnable <span class="o">)</span></div>
<div class="cl" style="left:0.70px;top:95.75px">   SetProperty<span class="o">(</span> xDlg<span class="o">,</span> xControl<span class="o">,</span> <span class="s">&quot;ENABLED&quot;</span><span class="o">,</span> lEnable <span class="o">)</span></div>
<div class="cl" style="left:0.70px;top:122.75px">   <span class="k">RETURN</span> Nil</div>
<div class="cl" style="left:0.70px;top:149.75px"><span class="k">FUNCTION</span> gui_TextGetValue<span class="o">(</span> xDlg<span class="o">,</span> xControl <span class="o">)</span></div>
<div class="cl" style="left:0.70px;top:176.75px">   <span class="o">(</span>xDlg<span class="o">)</span></div>
</div>
<div class="abs" style="left:824.6px;top:100.1px;width:1.5px;height:184.7px;background:#fff"></div>
<div class="abs" style="left:826.1px;top:250.5px;width:10.9px;height:14.0px;background:#cdcdcd"></div>
<svg class="abs" style="left:828.1px;top:104.3px" width="7" height="5" viewBox="0 0 7 5"><path d="M0.8 4 L3.5 1.2 L6.2 4" stroke="#505050" stroke-width="1.3" fill="none"/></svg>
<svg class="abs" style="left:828.1px;top:276.2px" width="7" height="5" viewBox="0 0 7 5"><path d="M0.8 1 L3.5 3.8 L6.2 1" stroke="#505050" stroke-width="1.3" fill="none"/></svg>
<div class="abs" style="left:440.0px;top:284.8px;width:86.5px;height:11.8px;background:#cdcdcd"></div>
<svg class="abs" style="left:430.9px;top:287.2px" width="5" height="7" viewBox="0 0 5 7"><path d="M4 0.8 L1.2 3.5 L4 6.2" stroke="#404040" stroke-width="1.3" fill="none"/></svg>
<svg class="abs" style="left:816.5px;top:287.2px" width="5" height="7" viewBox="0 0 5 7"><path d="M1 0.8 L3.8 3.5 L1 6.2" stroke="#404040" stroke-width="1.3" fill="none"/></svg>
<div class="abs" style="left:427.3px;top:296.6px;width:409.9px;height:12.9px;background:#f0f0f0;border-top:1px solid #bdbdbd;box-sizing:border-box"></div>
<div class="abs" style="left:427.8px;top:298.0px;width:12.2px;height:10.7px;background:#cce4f7;border:0.8px solid #8fc6f2;box-sizing:border-box"></div>
<div class="abs" style="left:451.9px;top:298.0px;width:12.2px;height:10.7px;background:#cce4f7;border:0.8px solid #8fc6f2;box-sizing:border-box"></div>
<svg class="abs" style="left:431.5px;top:301.1px" width="5.4" height="5.4" viewBox="0 0 6 6"><rect width="6" height="6" fill="#101010"/><rect x="0.7" y="0.7" width="2" height="2" fill="#e81010"/><rect x="3.3" y="0.7" width="2" height="2" fill="#1030f0"/><rect x="0.7" y="3.3" width="2" height="2" fill="#f0e800"/><rect x="3.3" y="3.3" width="2" height="2" fill="#10b010"/></svg>
<svg class="abs" style="left:442.4px;top:300.6px" width="7" height="6" viewBox="0 0 7 6"><path d="M3 0.9 H5 C6.6 0.9 6.6 3.6 5 3.6 H2.2" stroke="#111" stroke-width="1.1" fill="none"/><path d="M2.8 1.7 L0.6 3.6 L2.8 5.5 Z" fill="#111"/></svg>
<svg class="abs" style="left:455.2px;top:301.0px" width="5.6" height="5.6" viewBox="0 0 5.6 5.6"><path d="M1.6 0.2 V5.4 M4 0.2 V5.4 M0.2 1.6 H5.4 M0.2 4 H5.4" stroke="#151525" stroke-width="1.15" fill="none"/></svg>
<svg class="abs" style="left:466.4px;top:301.3px" width="7" height="5" viewBox="0 0 7 5"><path d="M0.4 2.5 H4.6" stroke="#111" stroke-width="0.9"/><path d="M3.8 0.6 L6.6 2.5 L3.8 4.4 Z" fill="#111"/></svg>
<svg class="abs" style="left:477.2px;top:300.2px" width="7" height="8" viewBox="0 0 7 8"><path d="M3.6 0.6 V7 M5.7 0.6 V7" stroke="#4a9af2" stroke-width="1.1"/><path d="M3.4 0.6 H6.6" stroke="#4a9af2" stroke-width="1"/><path d="M3.8 0.3 C0.2 0.1 0.2 4.2 3.8 4 Z" fill="#4a9af2"/></svg>
<svg class="abs" style="left:489.6px;top:299.8px" width="8" height="8" viewBox="0 0 8 8"><path d="M1 6.8 L4 4" stroke="#e2a820" stroke-width="2" stroke-linecap="round"/><circle cx="5.1" cy="2.9" r="2.2" fill="#f7d44a" stroke="#e0a81c" stroke-width="0.6"/><path d="M1.2 6.4 L3.6 4.2" stroke="#f7dc6a" stroke-width="0.8" stroke-linecap="round"/><circle cx="5.7" cy="2.2" r="0.6" fill="#fff7c8"/></svg>
<div class="cw" style="left:421.1px;top:315.6px;width:422.79999999999995px;height:240.60000000000002px"></div>
<svg class="abs" style="left:429.6px;top:324.9px" width="12" height="12" viewBox="0 0 12 12"><rect x="0.5" y="0.5" width="9.6" height="10.6" rx="1" fill="#fff" stroke="#b9c1cc" stroke-width="0.7"/><path d="M2.2 9.6 L3.4 6.6 L9.4 1.2 L11.3 3.2 L5.3 8.6 Z" fill="#f2c244"/><path d="M3.9 6.9 L9.7 1.8 L10.6 2.8 L4.9 8 Z" fill="#fde27a"/><path d="M2.2 9.6 L3.4 6.6 L5.3 8.6 Z" fill="#c98548"/><path d="M2.2 9.6 L2.7 8.4 L3.4 9.1 Z" fill="#5a4030"/><path d="M9.4 1.2 L10.1 0.7 L11.8 2.5 L11.3 3.2 Z" fill="#f3d2b0"/></svg>
<div class="abs wt" id="wt_w4" style="left:443.7px;top:324.3px;color:#a2a3a8;transform:scaleX(0.9625);transform-origin:0 0">D:\github\dlgauto\source\lib_oohg.prg</div>
<div class="wb" style="left:761.2px;top:323.8px;width:23.4px;height:13.6px"></div>
<svg class="abs" style="left:767.9px;top:329.1px" width="10" height="6" viewBox="0 0 10 6"><rect x="0.9" y="1" width="7.8" height="2.9" rx="1" fill="#fff" stroke="#6c7484" stroke-width="1"/></svg>
<div class="wb" style="left:786.7px;top:323.8px;width:23.4px;height:13.6px"></div>
<svg class="abs" style="left:793.9px;top:326.8px" width="9" height="8" viewBox="0 0 9 8"><rect x="0.8" y="0.8" width="7.2" height="5.9" rx="0.7" fill="#fff" stroke="#6c7484" stroke-width="1"/><rect x="2.9" y="2.6" width="3" height="2.2" fill="#8fa6c8" stroke="#6c7484" stroke-width="0.6"/></svg>
<div class="wb" style="left:812.2px;top:323.8px;width:23.4px;height:13.6px"></div>
<svg class="abs" style="left:818.9px;top:326.7px" width="10" height="8" viewBox="0 0 10 8"><path d="M2.5 1.9 L7.5 6.0 M7.5 1.9 L2.5 6.0" stroke="#6c7484" stroke-width="2.9" stroke-linecap="square"/><path d="M2.5 1.9 L7.5 6.0 M7.5 1.9 L2.5 6.0" stroke="#fff" stroke-width="1.6" stroke-linecap="square"/></svg>
<div class="abs" style="left:427.3px;top:339.7px;width:409.9px;height:209.0px;background:#f0f0f0"></div>
<div class="abs clip" style="left:427.3px;top:339.7px;width:38.6px;height:184.2px;background:#c0c0c0">
<div class="ln" style="top:0.95px">390</div>
<div class="ln" style="top:14.45px">391</div>
<div class="ln" style="top:27.95px">392</div>
<div class="ln" style="top:41.45px">393</div>
<div class="ln" style="top:54.95px">394</div>
<div class="ln" style="top:68.45px">395</div>
<div class="ln" style="top:81.95px">396</div>
<div class="ln" style="top:95.45px">397</div>
<div class="ln" style="top:108.95px">398</div>
<div class="ln" style="top:122.45px">399</div>
<div class="ln" style="top:135.95px">400</div>
<div class="ln" style="top:149.45px">401</div>
<div class="ln" style="top:162.95px">402</div>
<div class="ln" style="top:176.45px">403</div>
</div>
<div class="abs" style="left:465.9px;top:339.7px;width:11.0px;height:184.2px;background:#f7f7f7"></div>
<svg class="abs" style="left:427.3px;top:339.7px" width="50.1" height="184.2" viewBox="0 0 50.1 184.2"><path d="M44.40 -0.25V13.25" stroke="#9a9a9a" stroke-width="0.9" fill="none"/><path d="M44.40 13.25V26.75" stroke="#9a9a9a" stroke-width="0.9" fill="none"/><path d="M44.40 26.75V40.25" stroke="#9a9a9a" stroke-width="0.9" fill="none"/><path d="M44.40 40.25V47.00H49.00" stroke="#9a9a9a" stroke-width="0.9" fill="none"/><path d="M44.40 80.75V94.25" stroke="#9a9a9a" stroke-width="0.9" fill="none"/><path d="M44.40 94.25V107.75M44.40 101.00H49.00" stroke="#9a9a9a" stroke-width="0.9" fill="none"/><path d="M44.40 107.75V121.25" stroke="#9a9a9a" stroke-width="0.9" fill="none"/><path d="M44.40 121.25V128.00H49.00" stroke="#9a9a9a" stroke-width="0.9" fill="none"/><path d="M44.40 161.75V175.25" stroke="#9a9a9a" stroke-width="0.9" fill="none"/><path d="M44.40 175.25V188.75M44.40 182.00H49.00" stroke="#9a9a9a" stroke-width="0.9" fill="none"/></svg>
<div class="abs clip code" style="left:476.9px;top:339.7px;width:347.7px;height:184.2px">
<div class="cl" style="left:0.70px;top:0.95px">   <span class="c">//    :Height := ::nLineHeight</span></div>
<div class="cl" style="left:0.70px;top:14.45px">   <span class="c">//    :Value  := aItem[ CFG_VALUE ]</span></div>
<div class="cl" style="left:0.70px;top:27.95px">   <span class="c">// ENDWITH</span></div>
<div class="cl" style="left:0.70px;top:54.95px"><span class="k">FUNCTION</span> gui_ControlEnable<span class="o">(</span> xDlg<span class="o">,</span> xControl<span class="o">,</span> lEnable <span class="o">)</span></div>
<div class="cl" style="left:0.70px;top:81.95px">   SetProperty<span class="o">(</span> xDlg<span class="o">,</span> xControl<span class="o">,</span> <span class="s">&quot;ENABLED&quot;</span><span class="o">,</span> lEnable <span class="o">)</span></div>
<div class="cl" style="left:0.70px;top:108.95px">   <span class="k">RETURN</span> Nil</div>
<div class="cl" style="left:0.70px;top:135.95px"><span class="k">FUNCTION</span> gui_TextGetValue<span class="o">(</span> xDlg<span class="o">,</span> xControl <span class="o">)</span></div>
<div class="cl" style="left:0.70px;top:162.95px">   <span class="o">(</span>xDlg<span class="o">)</span></div>
</div>
<div class="abs" style="left:824.6px;top:339.7px;width:1.5px;height:184.2px;background:#fff"></div>
<div class="abs" style="left:826.1px;top:492.0px;width:10.9px;height:13.0px;background:#cdcdcd"></div>
<svg class="abs" style="left:828.1px;top:343.9px" width="7" height="5" viewBox="0 0 7 5"><path d="M0.8 4 L3.5 1.2 L6.2 4" stroke="#505050" stroke-width="1.3" fill="none"/></svg>
<svg class="abs" style="left:828.1px;top:515.3px" width="7" height="5" viewBox="0 0 7 5"><path d="M0.8 1 L3.5 3.8 L6.2 1" stroke="#505050" stroke-width="1.3" fill="none"/></svg>
<div class="abs" style="left:440.0px;top:523.9px;width:86.5px;height:12.0px;background:#cdcdcd"></div>
<svg class="abs" style="left:430.9px;top:526.4px" width="5" height="7" viewBox="0 0 5 7"><path d="M4 0.8 L1.2 3.5 L4 6.2" stroke="#404040" stroke-width="1.3" fill="none"/></svg>
<svg class="abs" style="left:816.5px;top:526.4px" width="5" height="7" viewBox="0 0 5 7"><path d="M1 0.8 L3.8 3.5 L1 6.2" stroke="#404040" stroke-width="1.3" fill="none"/></svg>
<div class="abs" style="left:427.3px;top:535.9px;width:409.9px;height:12.8px;background:#f0f0f0;border-top:1px solid #bdbdbd;box-sizing:border-box"></div>
<div class="abs" style="left:427.8px;top:537.3px;width:12.2px;height:10.7px;background:#cce4f7;border:0.8px solid #8fc6f2;box-sizing:border-box"></div>
<div class="abs" style="left:451.9px;top:537.3px;width:12.2px;height:10.7px;background:#cce4f7;border:0.8px solid #8fc6f2;box-sizing:border-box"></div>
<svg class="abs" style="left:431.5px;top:540.4px" width="5.4" height="5.4" viewBox="0 0 6 6"><rect width="6" height="6" fill="#101010"/><rect x="0.7" y="0.7" width="2" height="2" fill="#e81010"/><rect x="3.3" y="0.7" width="2" height="2" fill="#1030f0"/><rect x="0.7" y="3.3" width="2" height="2" fill="#f0e800"/><rect x="3.3" y="3.3" width="2" height="2" fill="#10b010"/></svg>
<svg class="abs" style="left:442.4px;top:539.9px" width="7" height="6" viewBox="0 0 7 6"><path d="M3 0.9 H5 C6.6 0.9 6.6 3.6 5 3.6 H2.2" stroke="#111" stroke-width="1.1" fill="none"/><path d="M2.8 1.7 L0.6 3.6 L2.8 5.5 Z" fill="#111"/></svg>
<svg class="abs" style="left:455.2px;top:540.3px" width="5.6" height="5.6" viewBox="0 0 5.6 5.6"><path d="M1.6 0.2 V5.4 M4 0.2 V5.4 M0.2 1.6 H5.4 M0.2 4 H5.4" stroke="#151525" stroke-width="1.15" fill="none"/></svg>
<svg class="abs" style="left:466.4px;top:540.6px" width="7" height="5" viewBox="0 0 7 5"><path d="M0.4 2.5 H4.6" stroke="#111" stroke-width="0.9"/><path d="M3.8 0.6 L6.6 2.5 L3.8 4.4 Z" fill="#111"/></svg>
<svg class="abs" style="left:477.2px;top:539.5px" width="7" height="8" viewBox="0 0 7 8"><path d="M3.6 0.6 V7 M5.7 0.6 V7" stroke="#4a9af2" stroke-width="1.1"/><path d="M3.4 0.6 H6.6" stroke="#4a9af2" stroke-width="1"/><path d="M3.8 0.3 C0.2 0.1 0.2 4.2 3.8 4 Z" fill="#4a9af2"/></svg>
<svg class="abs" style="left:489.6px;top:539.1px" width="8" height="8" viewBox="0 0 8 8"><path d="M1 6.8 L4 4" stroke="#e2a820" stroke-width="2" stroke-linecap="round"/><circle cx="5.1" cy="2.9" r="2.2" fill="#f7d44a" stroke="#e0a81c" stroke-width="0.6"/><path d="M1.2 6.4 L3.6 4.2" stroke="#f7dc6a" stroke-width="0.8" stroke-linecap="round"/><circle cx="5.7" cy="2.2" r="0.6" fill="#fff7c8"/></svg>
<div class="cw" style="left:421.1px;top:555.6px;width:422.79999999999995px;height:238.79999999999995px"></div>
<svg class="abs" style="left:429.6px;top:564.3px" width="12" height="12" viewBox="0 0 12 12"><rect x="0.5" y="0.5" width="9.6" height="10.6" rx="1" fill="#fff" stroke="#b9c1cc" stroke-width="0.7"/><path d="M2.2 9.6 L3.4 6.6 L9.4 1.2 L11.3 3.2 L5.3 8.6 Z" fill="#f2c244"/><path d="M3.9 6.9 L9.7 1.8 L10.6 2.8 L4.9 8 Z" fill="#fde27a"/><path d="M2.2 9.6 L3.4 6.6 L5.3 8.6 Z" fill="#c98548"/><path d="M2.2 9.6 L2.7 8.4 L3.4 9.1 Z" fill="#5a4030"/><path d="M9.4 1.2 L10.1 0.7 L11.8 2.5 L11.3 3.2 Z" fill="#f3d2b0"/></svg>
<div class="abs wt" id="wt_w5" style="left:443.7px;top:563.7px;color:#a2a3a8;transform:scaleX(0.9604);transform-origin:0 0">D:\github\dlgauto\source\lib_hwgui.prg</div>
<div class="wb" style="left:761.2px;top:563.2px;width:23.4px;height:13.6px"></div>
<svg class="abs" style="left:767.9px;top:568.5px" width="10" height="6" viewBox="0 0 10 6"><rect x="0.9" y="1" width="7.8" height="2.9" rx="1" fill="#fff" stroke="#6c7484" stroke-width="1"/></svg>
<div class="wb" style="left:786.7px;top:563.2px;width:23.4px;height:13.6px"></div>
<svg class="abs" style="left:793.9px;top:566.2px" width="9" height="8" viewBox="0 0 9 8"><rect x="0.8" y="0.8" width="7.2" height="5.9" rx="0.7" fill="#fff" stroke="#6c7484" stroke-width="1"/><rect x="2.9" y="2.6" width="3" height="2.2" fill="#8fa6c8" stroke="#6c7484" stroke-width="0.6"/></svg>
<div class="wb" style="left:812.2px;top:563.2px;width:23.4px;height:13.6px"></div>
<svg class="abs" style="left:818.9px;top:566.1px" width="10" height="8" viewBox="0 0 10 8"><path d="M2.5 1.9 L7.5 6.0 M7.5 1.9 L2.5 6.0" stroke="#6c7484" stroke-width="2.9" stroke-linecap="square"/><path d="M2.5 1.9 L7.5 6.0 M7.5 1.9 L2.5 6.0" stroke="#fff" stroke-width="1.6" stroke-linecap="square"/></svg>
<div class="abs" style="left:427.3px;top:579.1px;width:409.9px;height:209.5px;background:#f0f0f0"></div>
<div class="abs clip" style="left:427.3px;top:579.1px;width:38.6px;height:183.5px;background:#c0c0c0">
<div class="ln" style="top:1.05px">335</div>
<div class="ln" style="top:14.55px">336</div>
<div class="ln" style="top:28.05px">337</div>
<div class="ln" style="top:41.55px">338</div>
<div class="ln" style="top:55.05px">339</div>
<div class="ln" style="top:68.55px">340</div>
<div class="ln" style="top:82.05px">341</div>
<div class="ln" style="top:95.55px">342</div>
<div class="ln" style="top:109.05px">343</div>
<div class="ln" style="top:122.55px">344</div>
<div class="ln" style="top:136.05px">345</div>
<div class="ln" style="top:149.55px">346</div>
<div class="ln" style="top:163.05px">347</div>
<div class="ln" style="top:176.55px">348</div>
</div>
<div class="abs" style="left:465.9px;top:579.1px;width:11.0px;height:183.5px;background:#f7f7f7"></div>
<svg class="abs" style="left:427.3px;top:579.1px" width="50.1" height="183.5" viewBox="0 0 50.1 183.5"><path d="M44.40 -0.15V6.60H49.00" stroke="#9a9a9a" stroke-width="0.9" fill="none"/><path d="M44.40 40.35V43.60" stroke="#9a9a9a" stroke-width="0.9" fill="none"/><path d="M44.40 50.60V53.85" stroke="#9a9a9a" stroke-width="0.9" fill="none"/><rect x="40.50" y="43.40" width="7.8" height="7.4" fill="#fdfdfd" stroke="#868686" stroke-width="0.9"/><path d="M42.20 47.10H46.60" stroke="#444" stroke-width="1"/><path d="M44.40 53.85V67.35M44.40 60.60H49.00" stroke="#9a9a9a" stroke-width="0.9" fill="none"/><path d="M44.40 67.35V70.60" stroke="#9a9a9a" stroke-width="0.9" fill="none"/><path d="M44.40 77.60V80.85" stroke="#9a9a9a" stroke-width="0.9" fill="none"/><rect x="40.50" y="70.40" width="7.8" height="7.4" fill="#fdfdfd" stroke="#868686" stroke-width="0.9"/><path d="M42.20 74.10H46.60" stroke="#444" stroke-width="1"/><path d="M44.40 80.85V94.35M44.40 87.60H49.00" stroke="#9a9a9a" stroke-width="0.9" fill="none"/><path d="M44.40 94.35V107.85" stroke="#9a9a9a" stroke-width="0.9" fill="none"/><path d="M44.40 107.85V121.35" stroke="#9a9a9a" stroke-width="0.9" fill="none"/><path d="M44.40 121.35V134.85M44.40 128.10H49.00" stroke="#9a9a9a" stroke-width="0.9" fill="none"/><path d="M44.40 134.85V148.35" stroke="#9a9a9a" stroke-width="0.9" fill="none"/><path d="M44.40 148.35V155.10H49.00" stroke="#9a9a9a" stroke-width="0.9" fill="none"/></svg>
<div class="abs clip code" style="left:476.9px;top:579.1px;width:347.7px;height:183.5px">
<div class="cl" style="left:0.70px;top:14.55px"><span class="k">FUNCTION</span> gui_ControlEnable<span class="o">(</span> xDlg<span class="o">,</span> xControl<span class="o">,</span> lEnable <span class="o">)</span></div>
<div class="cl" style="left:0.70px;top:41.55px">   <span class="k">IF</span> lEnable</div>
<div class="cl" style="left:0.70px;top:55.05px">      xControl<span class="o">:</span>Enable<span class="o">(</span><span class="o">)</span></div>
<div class="cl" style="left:0.70px;top:68.55px">   <span class="k">ELSE</span></div>
<div class="cl" style="left:0.70px;top:82.05px">      xControl<span class="o">:</span>Disable<span class="o">(</span><span class="o">)</span></div>
<div class="cl" style="left:0.70px;top:95.55px">   <span class="k">ENDIF</span></div>
<div class="cl" style="left:0.70px;top:109.05px">   <span class="o">(</span>xDlg<span class="o">)</span></div>
<div class="cl" style="left:0.70px;top:136.05px">   <span class="k">RETURN</span> Nil</div>
<div class="cl" style="left:0.70px;top:163.05px"><span class="k">FUNCTION</span> gui_TextGetValue<span class="o">(</span> xDlg<span class="o">,</span> xControl <span class="o">)</span></div>
<div class="abs" style="left:19.00px;top:53.85px;width:0;height:13.50px;border-left:1px dotted #c8c8c8"></div>
<div class="abs" style="left:19.00px;top:80.85px;width:0;height:13.50px;border-left:1px dotted #c8c8c8"></div>
</div>
<div class="abs" style="left:824.6px;top:579.1px;width:1.5px;height:183.5px;background:#fff"></div>
<div class="abs" style="left:826.1px;top:726.0px;width:10.9px;height:13.0px;background:#cdcdcd"></div>
<svg class="abs" style="left:828.1px;top:583.3px" width="7" height="5" viewBox="0 0 7 5"><path d="M0.8 4 L3.5 1.2 L6.2 4" stroke="#505050" stroke-width="1.3" fill="none"/></svg>
<svg class="abs" style="left:828.1px;top:754.0px" width="7" height="5" viewBox="0 0 7 5"><path d="M0.8 1 L3.5 3.8 L6.2 1" stroke="#505050" stroke-width="1.3" fill="none"/></svg>
<div class="abs" style="left:440.0px;top:762.6px;width:86.5px;height:13.4px;background:#cdcdcd"></div>
<svg class="abs" style="left:430.9px;top:765.8px" width="5" height="7" viewBox="0 0 5 7"><path d="M4 0.8 L1.2 3.5 L4 6.2" stroke="#404040" stroke-width="1.3" fill="none"/></svg>
<svg class="abs" style="left:816.5px;top:765.8px" width="5" height="7" viewBox="0 0 5 7"><path d="M1 0.8 L3.8 3.5 L1 6.2" stroke="#404040" stroke-width="1.3" fill="none"/></svg>
<div class="abs" style="left:427.3px;top:776.0px;width:409.9px;height:12.6px;background:#f0f0f0;border-top:1px solid #bdbdbd;box-sizing:border-box"></div>
<div class="abs" style="left:427.8px;top:777.4px;width:12.2px;height:10.7px;background:#cce4f7;border:0.8px solid #8fc6f2;box-sizing:border-box"></div>
<div class="abs" style="left:451.9px;top:777.4px;width:12.2px;height:10.7px;background:#cce4f7;border:0.8px solid #8fc6f2;box-sizing:border-box"></div>
<svg class="abs" style="left:431.5px;top:780.5px" width="5.4" height="5.4" viewBox="0 0 6 6"><rect width="6" height="6" fill="#101010"/><rect x="0.7" y="0.7" width="2" height="2" fill="#e81010"/><rect x="3.3" y="0.7" width="2" height="2" fill="#1030f0"/><rect x="0.7" y="3.3" width="2" height="2" fill="#f0e800"/><rect x="3.3" y="3.3" width="2" height="2" fill="#10b010"/></svg>
<svg class="abs" style="left:442.4px;top:780.0px" width="7" height="6" viewBox="0 0 7 6"><path d="M3 0.9 H5 C6.6 0.9 6.6 3.6 5 3.6 H2.2" stroke="#111" stroke-width="1.1" fill="none"/><path d="M2.8 1.7 L0.6 3.6 L2.8 5.5 Z" fill="#111"/></svg>
<svg class="abs" style="left:455.2px;top:780.4px" width="5.6" height="5.6" viewBox="0 0 5.6 5.6"><path d="M1.6 0.2 V5.4 M4 0.2 V5.4 M0.2 1.6 H5.4 M0.2 4 H5.4" stroke="#151525" stroke-width="1.15" fill="none"/></svg>
<svg class="abs" style="left:466.4px;top:780.7px" width="7" height="5" viewBox="0 0 7 5"><path d="M0.4 2.5 H4.6" stroke="#111" stroke-width="0.9"/><path d="M3.8 0.6 L6.6 2.5 L3.8 4.4 Z" fill="#111"/></svg>
<svg class="abs" style="left:477.2px;top:779.6px" width="7" height="8" viewBox="0 0 7 8"><path d="M3.6 0.6 V7 M5.7 0.6 V7" stroke="#4a9af2" stroke-width="1.1"/><path d="M3.4 0.6 H6.6" stroke="#4a9af2" stroke-width="1"/><path d="M3.8 0.3 C0.2 0.1 0.2 4.2 3.8 4 Z" fill="#4a9af2"/></svg>
<svg class="abs" style="left:489.6px;top:779.2px" width="8" height="8" viewBox="0 0 8 8"><path d="M1 6.8 L4 4" stroke="#e2a820" stroke-width="2" stroke-linecap="round"/><circle cx="5.1" cy="2.9" r="2.2" fill="#f7d44a" stroke="#e0a81c" stroke-width="0.6"/><path d="M1.2 6.4 L3.6 4.2" stroke="#f7dc6a" stroke-width="0.8" stroke-linecap="round"/><circle cx="5.7" cy="2.2" r="0.6" fill="#fff7c8"/></svg>
<div class="abs" style="left:0;top:795px;width:845.4px;height:18.6px;background:#f0f0f0"></div>
<div class="ssep" style="left:87.0px"></div>
<div class="ssep" style="left:138.8px"></div>
<div class="ssep" style="left:191.8px"></div>
<div class="ssep" style="left:228.9px"></div>
<div class="ssep" style="left:252.1px"></div>
<div class="ui st" id="s0" style="left:0.2px;top:798.4px;font-size:9.2px;transform:scaleX(0.8861);transform-origin:0 0">[350:15] : 396</div>
<div class="ui st" id="s1" style="left:143.2px;top:798.4px;font-size:9.2px;transform:scaleX(0.9112);transform-origin:0 0">ANSI</div>
<div class="ui st" id="s2" style="left:196.2px;top:798.4px;font-size:9.2px;transform:scaleX(0.8874);transform-origin:0 0">CR+LF</div>
<div class="ui st" id="s3" style="left:233.6px;top:798.4px;font-size:9.2px;transform:scaleX(0.8889);transform-origin:0 0">INS</div>
<div class="ui st" id="s4" style="left:256.2px;top:798.4px;font-size:9.2px;transform:scaleX(0.8835);transform-origin:0 0">Ready</div>
<svg class="abs" style="left:837px;top:805px" width="8" height="8" viewBox="0 0 8 8"><g fill="#b8b8b8"><rect x="5.6" y="0.6" width="1.3" height="1.3"/><rect x="5.6" y="3" width="1.3" height="1.3"/><rect x="5.6" y="5.4" width="1.3" height="1.3"/><rect x="3.2" y="3" width="1.3" height="1.3"/><rect x="3.2" y="5.4" width="1.3" height="1.3"/><rect x="0.8" y="5.4" width="1.3" height="1.3"/></g></svg>
<div class="abs" style="left:845.3px;top:0;width:1.1px;height:762px;background:#8c8c8c"></div>
<div class="abs" style="left:845.4px;top:761.4px;width:1.6px;height:59.6px;background:#000"></div>
<div class="abs" style="left:0;top:814px;width:847px;height:7px;background:#000"></div>
</body></html>
